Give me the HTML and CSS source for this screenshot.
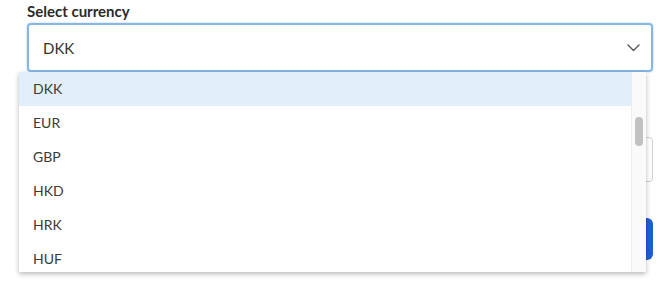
FILE: index.html
```html
<!DOCTYPE html>
<html lang="en">
<head>
  <meta charset="UTF-8" />
  <title>Select currency</title>
  <link rel="stylesheet" href="styles.css">
</head>
<body>
  <div class="form">
    <label class="field-label" for="currency">Select currency</label>
    <div class="select" id="currency">
      <span class="select-value">DKK</span>
      <svg class="chevron" width="13" height="8" viewBox="0 0 13 8">
        <path d="M1 1 L6.5 6.5 L12 1" fill="none" stroke="#555" stroke-width="1.4" stroke-linecap="round" stroke-linejoin="round"/>
      </svg>
    </div>

    <!-- amount field and submit button sit under the open list -->
    <div class="field">
      <input type="text" id="amount" class="text-input" aria-label="Amount">
    </div>

    <button class="primary-btn" aria-label="Continue"></button>

    <div class="dropdown">
      <ul class="options">
        <li class="option active">DKK</li>
        <li class="option">EUR</li>
        <li class="option">GBP</li>
        <li class="option">HKD</li>
        <li class="option">HRK</li>
        <li class="option">HUF</li>
      </ul>
      <div class="scrollbar">
        <div class="thumb"></div>
      </div>
    </div>
  </div>
</body>
</html>
```

FILE: styles.css
```css
body {
  margin: 0;
  background-color: #fff;
  font-family: 'Lato', 'Open Sans', sans-serif;
  color: #333;
}

.form {
  position: relative;
  min-height: 289px;
  box-sizing: border-box;
  padding: 2px 17px 0 27px;
}

.field-label {
  display: block;
  font-size: 15px;
  line-height: 18px;
  font-weight: bold;
  color: #2b2b2b;
}

.select {
  display: flex;
  align-items: center;
  justify-content: space-between;
  height: 45px;
  margin-top: 3px;
  padding: 0 11px 0 14px;
  border: 2px solid #84b7e8;
  border-radius: 4px;
  box-shadow: 0 0 2px rgba(80, 150, 220, 0.5);
  font-size: 15px;
  color: #333;
}

.chevron {
  margin-top: 1px;
}

.field {
  margin-top: 65px;
}

.text-input {
  display: block;
  width: 100%;
  height: 45px;
  border: 1px solid #d0d0d0;
  border-radius: 4px;
  box-sizing: border-box;
}

.primary-btn {
  display: block;
  width: 100%;
  height: 42px;
  margin-top: 36px;
  border: none;
  border-radius: 6px;
  background-color: #1f5fd4;
}

.dropdown {
  position: absolute;
  left: 19px;
  top: 72px;
  width: 627px;
  height: 200px;
  display: flex;
  background-color: #fff;
  box-shadow: 0 2px 5px rgba(0, 0, 0, 0.28);
  overflow: hidden;
}

.options {
  flex: 1;
  margin: 0;
  padding: 0;
  list-style: none;
}

.option {
  height: 34px;
  line-height: 34px;
  padding-left: 14px;
  font-size: 14px;
  color: #3a3a3a;
}

.option.active {
  background-color: #e2effb;
}

.scrollbar {
  width: 14px;
  background-color: #fafafa;
  border-left: 1px solid #ececec;
}

.thumb {
  width: 8px;
  height: 29px;
  margin: 45px 0 0 3px;
  border-radius: 4px;
  background-color: #c1c1c1;
}
```
